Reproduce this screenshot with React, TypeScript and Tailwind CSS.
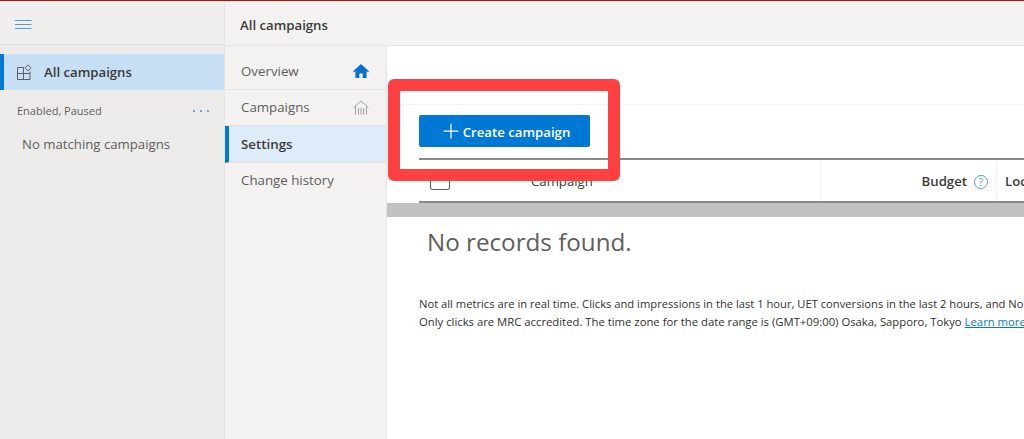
import { Plus } from "lucide-react";

const font = "font-['Open_Sans','Noto_Sans',sans-serif]";

function Hamburger() {
  return (
    <svg width="17" height="10" viewBox="0 0 17 10" fill="none" stroke="#4d9ae0" strokeWidth="1">
      <path d="M0 .5h16.5M0 4.5h16.5M0 8.5h16.5" />
    </svg>
  );
}

function CampaignsIcon() {
  return (
    <svg width="16" height="16" viewBox="0 0 16 16" fill="none" stroke="#605e5c" strokeWidth="1">
      <path d="M1.5 3.5h6v12h-6zM1.5 9.5h12.5M7.5 15.5h6.5v-8" />
      <path d="M12 .9l3 3-3 3-3-3z" />
    </svg>
  );
}

function HomeFilled() {
  return (
    <svg width="16" height="14" viewBox="0 0 16 14" fill="#0b6fd0">
      <path d="M8 0l8 7.2-.9 1L13.6 7v7H9.7V9.5H6.3V14H2.4V7L.9 8.2 0 7.2z" />
    </svg>
  );
}

function HomeOutline() {
  return (
    <svg width="16" height="15" viewBox="0 0 16 15" fill="none" stroke="#a19f9d" strokeWidth="1">
      <path d="M.6 7.6L8 1l7.4 6.6M2.5 6.2v8.3M13.5 6.2v8.3M5.5 8v6.5M8 8v6.5M10.5 8v6.5" />
    </svg>
  );
}

function SubItem({ label, icon, active, last }: { label: string; icon?: React.ReactNode; active?: boolean; last?: boolean }) {
  return (
    <div
      className={`flex h-[36.5px] items-center justify-between pr-[17px] text-[13.3px] ${
        last ? "" : "border-b border-[#e6e4e2]"
      } ${active ? "border-l-4 border-l-[#0078d4] bg-[#deecf9] pl-3 font-semibold text-[#3b3a39]" : "pl-4 text-[#605e5c]"}`}
    >
      <span className={last ? "" : "pt-[2px]"}>{label}</span>
      {icon}
    </div>
  );
}

export default function App() {
  return (
    <div className={`relative flex h-[439px] w-[1024px] flex-col overflow-hidden bg-white ${font}`}>
      <div className="h-px bg-[#b50f0f]" />
      <div className="flex min-h-0 flex-1">
        {/* Left sidebar */}
        <aside className="flex w-[225px] shrink-0 flex-col border-r border-[#e6e4e2] bg-[#edebe9]">
          <div className="flex h-[44px] items-center border-b border-[#e3e1df] bg-[#f0efed] pl-[15px] pt-[5px]">
            <Hamburger />
          </div>
          <div className="mt-[9px] flex h-[36px] items-center gap-[12px] border-l-4 border-[#0078d4] bg-[#c7dff4] pl-3 text-[13.2px] font-semibold text-[#3b3a39]">
            <CampaignsIcon />
            <span className="pt-[2px]">All campaigns</span>
          </div>
          <div className="mt-[12px] flex h-[18px] items-center justify-between pl-[17px] pr-[15px] text-[11px] text-[#605e5c]">
            Enabled, Paused
            <span className="flex gap-[5px]">
              <span className="h-[2px] w-[2px] rounded-full bg-[#3f8ad0]" />
              <span className="h-[2px] w-[2px] rounded-full bg-[#3f8ad0]" />
              <span className="h-[2px] w-[2px] rounded-full bg-[#3f8ad0]" />
            </span>
          </div>
          <div className="mt-[15px] pl-[22px] text-[13.2px] leading-[18px] text-[#605e5c]">No matching campaigns</div>
        </aside>

        <div className="flex min-w-0 flex-1 flex-col">
          <header className="flex h-[45px] shrink-0 items-center border-b border-[#e6e4e2] bg-[#f3f2f1] pl-[15px] pt-[5px] text-[13.2px] font-semibold text-[#3b3a39]">
            All campaigns
          </header>
          <div className="flex min-h-0 flex-1">
            {/* Sub navigation */}
            <nav className="flex w-[162px] shrink-0 flex-col border-r border-[#e6e4e2] bg-[#f3f2f1] pt-[7px]">
              <SubItem label="Overview" icon={<HomeFilled />} />
              <SubItem label="Campaigns" icon={<HomeOutline />} />
              <SubItem label="Settings" active />
              <SubItem label="Change history" last />
            </nav>

            {/* Main */}
            <main className="min-w-0 flex-1">
              <div className="h-[59px] border-b border-[#f3f2f1]" />
              <div className="pl-[32px]">
                <button className="mt-[10px] flex h-[32px] w-[171px] items-center justify-center rounded-[2px] bg-[#0078d4] text-[13.2px] font-semibold text-white">
                  <Plus size={24} strokeWidth={1.25} />
                  <span className="pt-[3px]">Create campaign</span>
                </button>
                <div className="mt-[11px] flex h-[45px] items-center border-y-2 border-[#8a8886] text-[13.2px] font-semibold text-[#3b3a39]">
                  <span className="ml-[11px] h-[19px] w-[20px] shrink-0 rounded-[2px] border border-[#605e5c]" />
                  <span className="ml-[81px] w-[289px] shrink-0 pt-[2px] font-normal">Campaign</span>
                  <div className="flex h-full w-[177px] shrink-0 items-center justify-end gap-[7px] border-x border-[#f3f2f1] pr-[8px]">
                    <span className="pt-[3px]">Budget</span>
                    <span className="mt-[2px] flex h-[14px] w-[14px] items-center justify-center rounded-full border border-[#5a9fdc] text-[10px] font-normal leading-none text-[#5a9fdc]">
                      ?
                    </span>
                  </div>
                  <span className="ml-[8px] shrink-0 pt-[3px]">Location</span>
                </div>
              </div>
              <div className="h-[14px] bg-[#c2c2c2]" />
              <div className="mt-[9px] pl-[40px] text-[24.2px] leading-[32px] text-[#605e5c]">No records found.</div>
              <div className="mt-[37px] whitespace-nowrap pl-[32px] text-[#323130]">
                <p className="text-[11.2px] leading-[18px]">Not all metrics are in real time. Clicks and impressions in the last 1 hour, UET conversions in the last 2 hours, and No</p>
                <p className="text-[11.3px] leading-[17px]">
                  Only clicks are MRC accredited. The time zone for the date range is (GMT+09:00) Osaka, Sapporo, Tokyo{" "}
                  <span className="text-[#0078d4] underline">Learn more</span>
                </p>
              </div>
            </main>
          </div>
        </div>
      </div>

      {/* Red annotation frame over the screenshot */}
      <div className="absolute left-[388px] top-[79px] h-[102px] w-[232px] rounded-[6px] border-[12px] border-[#ff4040]" />
    </div>
  );
}
